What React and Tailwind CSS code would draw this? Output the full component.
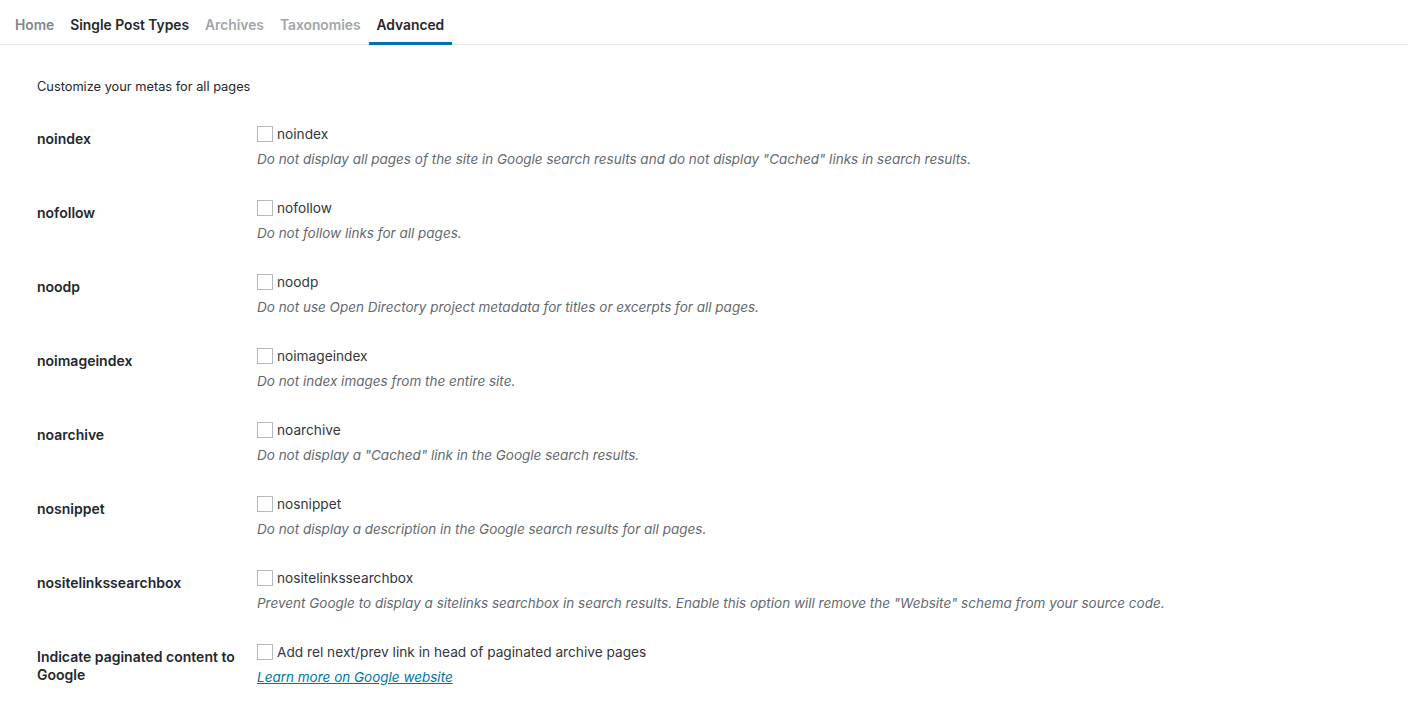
const tabs = [
  { label: 'Home', className: 'text-[#82878c]' },
  { label: 'Single Post Types', className: 'text-[#23282d]' },
  { label: 'Archives', className: 'text-[#a0a5aa]' },
  { label: 'Taxonomies', className: 'text-[#a0a5aa]' },
  { label: 'Advanced', className: 'text-[#23282d]', active: true },
]

const options = [
  {
    name: 'noindex',
    desc: 'Do not display all pages of the site in Google search results and do not display "Cached" links in search results.',
  },
  { name: 'nofollow', desc: 'Do not follow links for all pages.' },
  { name: 'noodp', desc: 'Do not use Open Directory project metadata for titles or excerpts for all pages.' },
  { name: 'noimageindex', desc: 'Do not index images from the entire site.' },
  { name: 'noarchive', desc: 'Do not display a "Cached" link in the Google search results.' },
  { name: 'nosnippet', desc: 'Do not display a description in the Google search results for all pages.' },
  {
    name: 'nositelinkssearchbox',
    desc: 'Prevent Google to display a sitelinks searchbox in search results. Enable this option will remove the "Website" schema from your source code.',
  },
]

function Checkbox() {
  return <span className="inline-block w-[16px] h-[16px] border border-[#b4b9be] bg-white shrink-0" />
}

function Row({ label, children }) {
  return (
    <div className="flex h-[74px]">
      <div className="w-[220px] pt-[10px] pr-[10px] text-[14px] leading-[18px] font-semibold text-[#23282d]">
        {label}
      </div>
      {children}
    </div>
  )
}

export default function App() {
  return (
    <div
      className="min-h-[709px] bg-white text-[#23282d]"
      style={{ fontFamily: 'Inter, "Noto Sans", sans-serif' }}
    >
      <div className="flex h-[45px] border-b border-[#e5e5e5] pl-[7px]">
        {tabs.map(t => (
          <div
            key={t.label}
            className={`px-2 h-[45px] -mb-px flex items-center pt-[8px] border-b-[3px] text-[13.8px] font-semibold ${t.className} ${
              t.active ? 'border-[#0073aa]' : 'border-transparent'
            }`}
          >
            {t.label}
          </div>
        ))}
      </div>

      <div className="pl-[37px]">
        <p className="mt-[33px] text-[12.8px] leading-[18px] text-[#23282d]">Customize your metas for all pages</p>

        <div className="mt-[24px]">
          {options.map(o => (
            <Row key={o.name} label={o.name}>
              <div>
                <div className="mt-[6px] flex items-center gap-[4px] h-[16px]">
                  <Checkbox />
                  <span className="text-[13.7px] text-[#32373c]">{o.name}</span>
                </div>
                <p className="mt-[8px] text-[13.5px] leading-[18px] italic text-[#646970]">{o.desc}</p>
              </div>
            </Row>
          ))}
          <Row label="Indicate paginated content to Google">
            <div>
              <div className="mt-[6px] flex items-center gap-[4px] h-[16px]">
                <Checkbox />
                <span className="text-[13.7px] text-[#32373c]">Add rel next/prev link in head of paginated archive pages</span>
              </div>
              <p className="mt-[8px] text-[13.5px] leading-[18px] italic">
                <a href="#" className="text-[#0073aa] underline">Learn more on Google website</a>
              </p>
            </div>
          </Row>
        </div>
      </div>
    </div>
  )
}
